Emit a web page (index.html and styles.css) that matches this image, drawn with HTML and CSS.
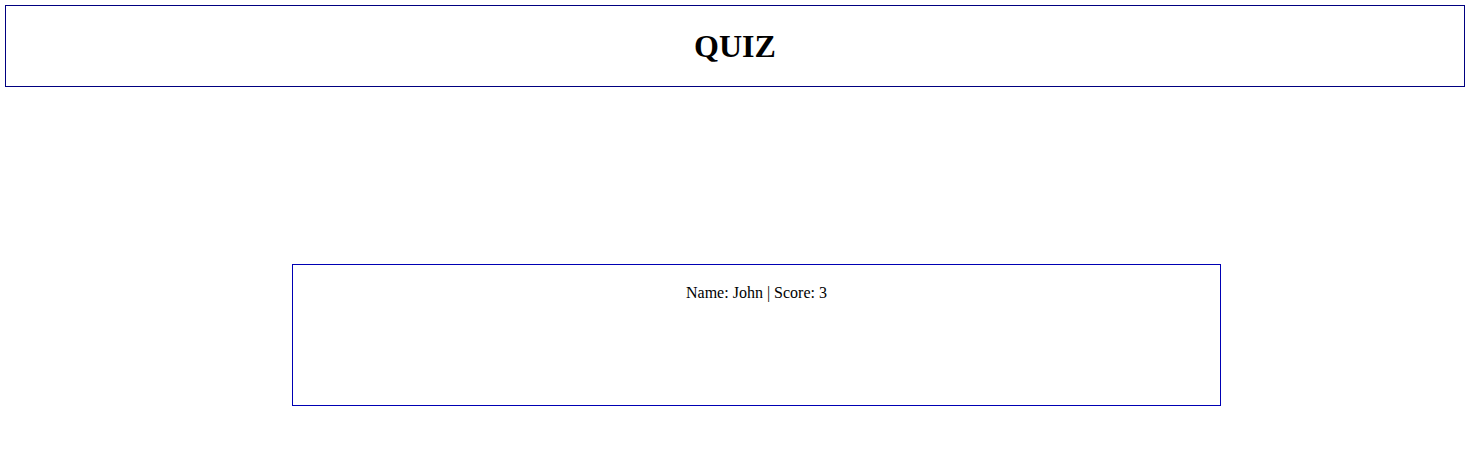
FILE: index.html
```html
<!DOCTYPE html>
<html>
<head>
<meta charset="utf-8">
<title>Quiz</title>
<link rel="stylesheet" href="styles.css">
</head>
<body>
<header class="header">
  <h1 class="title">QUIZ</h1>
</header>
<main class="main">
  <section class="result">
    <p class="result-text">Name: John | Score: 3</p>
  </section>
</main>
</body>
</html>
```
FILE: styles.css
```css
html, body {
  margin: 0;
  padding: 0;
  background: #fff;
}
body {
  padding: 5px 5px 0 5px;
  font-family: "Liberation Serif", "Times New Roman", serif;
  color: #000;
}
.header {
  height: 80px;
  border: 1px solid #000080;
  display: flex;
  align-items: center;
  justify-content: center;
}
.title {
  margin: 0;
  font-size: 32px;
  font-weight: bold;
  line-height: 37px;
}
.main {
  padding-top: 177px;
  padding-left: 287px;
}
.result {
  width: 927px;
  height: 140px;
  border: 1px solid #0000b4;
  box-sizing: content-box;
}
.result-text {
  margin: 19px 0 0 0;
  text-align: center;
  font-size: 16px;
  line-height: 18px;
}
```
